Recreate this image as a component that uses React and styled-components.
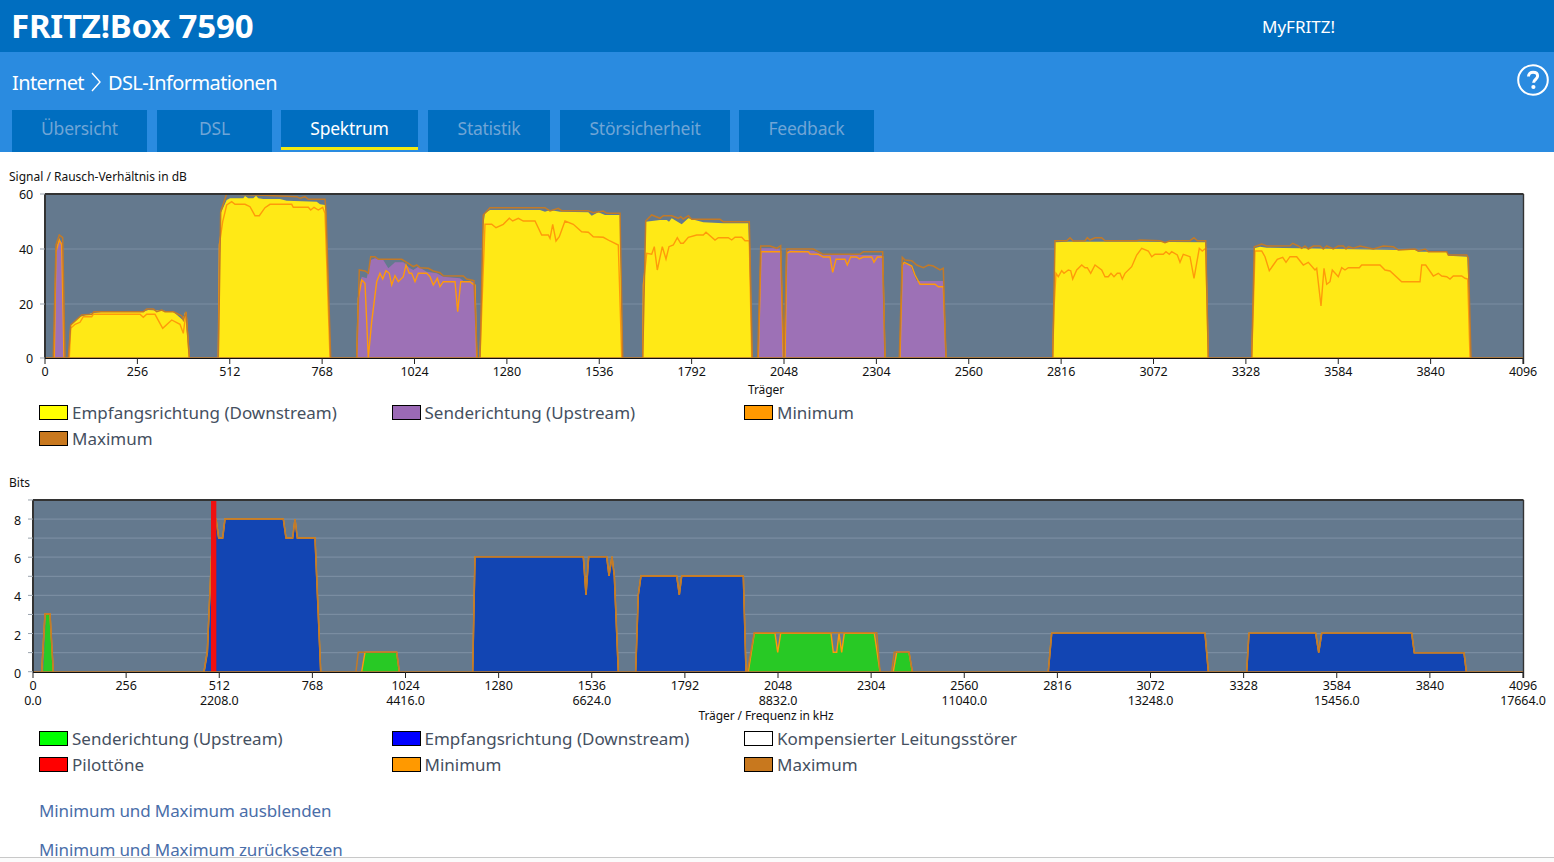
import React from "react";
import styled, { createGlobalStyle } from "styled-components";

const GlobalStyle = createGlobalStyle`
  html, body {
    margin: 0;
    padding: 0;
    height: 862px;
    overflow: hidden;
    background: #fff;
    font-family: "Noto Sans", "Open Sans", sans-serif;
  }
`;

// Punkte aus dem Screenshot: Ausschnitt-Koordinaten (3x) zurueck auf Seitenpixel
const z = (ox, oy, pts) => pts.map(([x, y]) => [ox + x / 3, oy + y / 3]);
const str = (pts) => pts.map(([x, y]) => `${x.toFixed(1)},${y.toFixed(1)}`).join(" ");

const A = (pts) => z(0, 165, pts);
const B = (pts) => z(470, 185, pts);
const C = (pts) => z(1040, 225, pts);
const YELLOW = "#FFE916";
const PURPLE = "#9D71B6";
const GREEN = "#28C925";
const BLUE = "#1245B3";

const snrBlocks = [
  {
    color: PURPLE,
    fill: A([[163, 578], [170, 245], [178, 225], [188, 235], [195, 578]]),
    max: A([[160, 578], [168, 240], [178, 210], [188, 218], [195, 578]]),
    min: A([[163, 578], [168, 260], [178, 225], [185, 240], [192, 578]]),
  },
  {
    color: YELLOW,
    fill: A([[205, 578], [212, 480], [240, 455], [275, 445], [310, 440], [430, 440], [445, 435], [490, 437], [520, 440], [548, 465], [555, 442], [568, 578]]),
    max: A([[205, 578], [212, 480], [245, 450], [275, 448], [282, 440], [430, 440], [440, 432], [460, 432], [470, 440], [485, 435], [495, 440], [520, 440], [545, 452], [550, 465], [558, 440], [568, 578]]),
    min: A([[208, 578], [212, 490], [225, 478], [240, 472], [250, 455], [275, 455], [280, 448], [420, 448], [430, 457], [440, 448], [465, 448], [488, 490], [515, 465], [540, 478], [550, 505], [558, 442], [568, 578]]),
  },
  {
    color: YELLOW,
    fill: A([[655, 578], [662, 145], [680, 105], [690, 100], [730, 100], [735, 93], [745, 100], [760, 100], [768, 92], [775, 100], [790, 102], [840, 102], [860, 107], [950, 110], [960, 118], [975, 120], [978, 140], [992, 578]]),
    max: A([[655, 578], [662, 140], [680, 87], [770, 90], [890, 95], [900, 100], [915, 95], [925, 103], [975, 103], [978, 140], [992, 578]]),
    min: A([[655, 578], [658, 240], [668, 170], [680, 120], [695, 110], [705, 118], [735, 118], [750, 125], [765, 152], [778, 152], [795, 128], [810, 118], [875, 118], [880, 127], [925, 127], [932, 135], [942, 127], [955, 135], [968, 127], [975, 145], [990, 578]]),
  },
  {
    color: PURPLE,
    fill: A([[1070, 578], [1078, 360], [1085, 335], [1100, 340], [1112, 285], [1125, 280], [1150, 285], [1165, 310], [1185, 292], [1210, 292], [1230, 310], [1240, 315], [1255, 305], [1280, 320], [1310, 325], [1330, 335], [1380, 340], [1390, 348], [1422, 350], [1432, 578]]),
    max: A([[1070, 578], [1078, 315], [1095, 318], [1105, 325], [1112, 275], [1125, 275], [1135, 283], [1205, 283], [1225, 295], [1240, 305], [1250, 300], [1260, 308], [1285, 310], [1300, 318], [1320, 323], [1330, 332], [1390, 333], [1400, 342], [1422, 347], [1432, 578]]),
    min: A([[1070, 578], [1075, 400], [1085, 345], [1095, 355], [1105, 578], [1115, 470], [1130, 350], [1140, 325], [1148, 342], [1158, 317], [1168, 325], [1175, 360], [1185, 332], [1195, 350], [1210, 335], [1218, 300], [1228, 325], [1235, 325], [1245, 350], [1255, 325], [1280, 325], [1290, 335], [1300, 360], [1312, 340], [1320, 365], [1330, 350], [1365, 350], [1373, 440], [1382, 350], [1410, 350], [1420, 358], [1425, 360], [1430, 578]]),
  },
  {
    color: YELLOW,
    fill: B([[30, 518], [40, 120], [45, 85], [60, 75], [210, 75], [225, 80], [240, 75], [270, 80], [355, 82], [365, 92], [385, 82], [405, 90], [450, 90], [458, 518]]),
    max: B([[30, 518], [40, 90], [60, 68], [225, 68], [240, 78], [265, 70], [275, 77], [355, 77], [370, 83], [400, 78], [410, 85], [450, 85], [458, 518]]),
    min: B([[30, 518], [38, 300], [45, 118], [65, 118], [78, 128], [100, 118], [118, 100], [128, 108], [145, 100], [160, 108], [195, 108], [215, 150], [235, 150], [240, 160], [248, 118], [258, 168], [268, 155], [285, 108], [310, 118], [335, 140], [355, 142], [370, 155], [400, 157], [420, 168], [445, 180], [455, 518]]),
  },
  {
    color: YELLOW,
    fill: B([[518, 518], [527, 110], [570, 105], [590, 105], [597, 110], [605, 100], [635, 118], [655, 100], [700, 112], [760, 115], [835, 115], [847, 518]]),
    max: B([[518, 518], [527, 108], [545, 90], [570, 100], [580, 92], [605, 92], [625, 100], [632, 95], [640, 102], [655, 92], [665, 103], [750, 103], [760, 110], [838, 110], [847, 518]]),
    min: B([[518, 518], [520, 300], [530, 205], [545, 208], [553, 185], [562, 255], [577, 185], [588, 222], [597, 185], [610, 180], [622, 158], [632, 175], [640, 175], [655, 157], [680, 150], [700, 150], [708, 142], [735, 165], [745, 158], [775, 158], [785, 165], [795, 157], [815, 157], [825, 167], [838, 167], [845, 518]]),
  },
  {
    color: PURPLE,
    fill: B([[863, 518], [872, 190], [920, 190], [932, 195], [942, 518]]),
    max: B([[863, 518], [872, 183], [900, 183], [920, 190], [932, 182], [942, 518]]),
    min: B([[865, 518], [873, 200], [932, 200], [940, 518]]),
  },
  {
    color: PURPLE,
    fill: B([[945, 518], [950, 200], [960, 195], [1030, 197], [1060, 210], [1235, 210], [1245, 518]]),
    max: B([[942, 518], [950, 192], [1030, 192], [1060, 208], [1170, 208], [1180, 200], [1238, 200], [1245, 518]]),
    min: B([[945, 518], [950, 205], [960, 200], [1015, 200], [1020, 207], [1045, 208], [1060, 216], [1080, 216], [1088, 262], [1098, 223], [1125, 223], [1132, 240], [1142, 216], [1160, 216], [1168, 222], [1180, 216], [1205, 216], [1212, 232], [1222, 216], [1238, 216], [1245, 518]]),
  },
  {
    color: PURPLE,
    fill: B([[1288, 518], [1297, 235], [1320, 240], [1340, 288], [1420, 288], [1428, 518]]),
    max: B([[1288, 518], [1297, 217], [1305, 225], [1325, 227], [1340, 240], [1360, 248], [1375, 240], [1390, 243], [1410, 255], [1420, 250], [1428, 518]]),
    min: B([[1290, 518], [1297, 240], [1303, 232], [1325, 243], [1335, 270], [1350, 298], [1395, 298], [1405, 305], [1420, 305], [1428, 518]]),
  },
  {
    color: YELLOW,
    fill: C([[38, 398], [45, 52], [85, 50], [190, 50], [290, 50], [497, 52], [505, 398]]),
    max: C([[38, 398], [45, 47], [80, 47], [90, 38], [100, 48], [135, 47], [142, 38], [150, 45], [165, 38], [185, 38], [195, 47], [290, 47], [300, 45], [360, 47], [375, 53], [390, 47], [450, 47], [462, 38], [472, 47], [497, 47], [505, 398]]),
    min: C([[38, 398], [42, 250], [48, 145], [55, 155], [65, 137], [72, 145], [85, 135], [92, 137], [98, 162], [110, 135], [125, 120], [135, 128], [142, 128], [152, 145], [165, 120], [185, 135], [195, 155], [205, 155], [213, 145], [222, 155], [232, 145], [240, 145], [247, 162], [255, 145], [275, 125], [290, 90], [305, 70], [325, 78], [335, 95], [345, 88], [370, 88], [378, 80], [388, 88], [395, 80], [412, 90], [420, 112], [430, 88], [450, 95], [462, 160], [478, 70], [487, 78], [497, 70], [505, 398]]),
  },
  {
    color: YELLOW,
    fill: C([[635, 398], [643, 70], [660, 65], [680, 68], [1060, 75], [1125, 75], [1135, 80], [1220, 80], [1225, 92], [1282, 95], [1293, 398]]),
    max: C([[635, 398], [643, 65], [665, 57], [680, 63], [750, 62], [758, 55], [775, 63], [785, 70], [795, 63], [805, 72], [820, 63], [840, 63], [850, 72], [860, 63], [880, 72], [895, 63], [910, 63], [918, 72], [925, 65], [940, 70], [960, 63], [1000, 72], [1030, 63], [1060, 65], [1075, 75], [1125, 72], [1135, 78], [1155, 72], [1165, 80], [1220, 80], [1225, 90], [1280, 90], [1285, 100], [1293, 398]]),
    min: C([[635, 398], [640, 250], [645, 78], [665, 78], [675, 95], [688, 137], [700, 120], [712, 103], [728, 97], [738, 112], [750, 95], [770, 95], [790, 120], [805, 112], [825, 135], [830, 130], [843, 243], [852, 130], [860, 178], [870, 170], [877, 135], [895, 155], [905, 128], [915, 135], [925, 128], [958, 128], [965, 120], [1020, 120], [1035, 135], [1050, 138], [1085, 170], [1140, 170], [1145, 120], [1157, 120], [1180, 153], [1195, 145], [1205, 153], [1220, 155], [1230, 162], [1240, 153], [1265, 153], [1275, 160], [1283, 162], [1290, 398]]),
  },
];

const D = (pts) => z(0, 475, pts);
const E = (pts) => z(460, 540, pts);
const F = (pts) => z(1030, 620, pts);

const bitBlocks = [
  { color: GREEN, fill: D([[130, 590], [138, 417], [150, 417], [160, 590]]), max: D([[125, 590], [135, 417], [150, 417], [160, 590]]) },
  { color: BLUE, fill: D([[615, 590], [625, 530], [632, 300], [640, 132], [648, 132], [656, 189], [668, 189], [675, 132], [850, 132], [858, 189], [878, 189], [885, 132], [892, 189], [945, 189], [962, 590]]), max: D([[612, 590], [622, 530], [632, 300], [640, 132], [648, 132], [656, 189], [668, 189], [675, 132], [850, 132], [858, 189], [878, 189], [885, 132], [892, 189], [945, 189], [962, 590]]) },
  { color: GREEN, fill: D([[1085, 590], [1095, 532], [1190, 532], [1198, 590]]), max: D([[1068, 590], [1075, 532], [1190, 532], [1198, 590]]), min: D([[1085, 590], [1095, 532], [1190, 532], [1198, 590]]) },
  { color: BLUE, fill: E([[38, 395], [45, 50], [370, 50], [378, 165], [386, 50], [440, 50], [447, 108], [456, 50], [463, 108], [475, 395]]), max: E([[38, 395], [45, 50], [370, 50], [378, 165], [386, 50], [440, 50], [447, 108], [456, 50], [463, 108], [475, 395]]) },
  { color: BLUE, fill: E([[527, 395], [535, 165], [543, 108], [650, 108], [658, 165], [665, 108], [850, 108], [858, 395]]), max: E([[527, 395], [535, 165], [543, 108], [650, 108], [658, 165], [665, 108], [850, 108], [858, 395]]) },
  { color: GREEN, fill: E([[865, 395], [883, 280], [945, 280], [953, 337], [962, 280], [1113, 280], [1120, 337], [1130, 337], [1137, 280], [1145, 337], [1153, 280], [1243, 280], [1260, 395]]), max: E([[862, 395], [883, 278], [1250, 278], [1260, 395]]), min: E([[865, 395], [883, 280], [945, 280], [953, 337], [962, 280], [1113, 280], [1120, 337], [1130, 337], [1137, 280], [1145, 337], [1153, 280], [1243, 280], [1252, 340], [1260, 395]]) },
  { color: GREEN, fill: E([[1300, 395], [1310, 337], [1347, 337], [1357, 395]]), max: E([[1295, 395], [1303, 337], [1347, 337], [1357, 395]]), min: E([[1300, 395], [1310, 337], [1347, 337], [1357, 395]]) },
  { color: BLUE, fill: F([[55, 155], [65, 40], [525, 40], [535, 155]]), max: F([[55, 155], [65, 40], [525, 40], [535, 155]]) },
  { color: BLUE, fill: F([[650, 155], [657, 40], [857, 40], [866, 98], [875, 40], [1145, 40], [1153, 98], [1302, 98], [1309, 155]]), max: F([[650, 155], [657, 40], [857, 40], [866, 98], [875, 40], [1145, 40], [1153, 98], [1302, 98], [1309, 155]]) },
];

const carriers = Array.from({ length: 17 }, (_, i) => i * 256);

const Page = styled.div`
  width: 1554px;
  height: 862px;
  overflow: hidden;
  position: relative;
`;

const TopBar = styled.header`
  height: 52px;
  background: #006ec0;
  display: flex;
  align-items: center;
  color: #fff;
`;

const Brand = styled.div`
  width: 1262px;
  padding-left: 11px;
  box-sizing: border-box;
  font-size: 33px;
  font-weight: 700;
  letter-spacing: -0.2px;
  line-height: 52px;
`;

const MyFritz = styled.div`
  font-size: 17px;
`;

const SubBar = styled.div`
  height: 100px;
  background: #2a8be0;
  display: flex;
  flex-direction: column;
  position: relative;
`;

const Crumbs = styled.div`
  height: 58px;
  box-sizing: border-box;
  padding: 2px 0 0 12px;
  display: flex;
  align-items: center;
  gap: 7px;
  color: #fff;
  font-size: 20px;
  letter-spacing: -0.6px;
`;

const HelpButton = styled.div`
  position: absolute;
  top: 12px;
  right: 5px;
  width: 32px;
  height: 32px;
`;

const Tabs = styled.nav`
  display: flex;
  padding-left: 12px;
  height: 42px;
`;

const Tab = styled.div`
  width: ${(p) => p.$w}px;
  margin-right: ${(p) => p.$gap}px;
  box-sizing: border-box;
  background: #006ec0;
  color: ${(p) => (p.$active ? "#fff" : "#6fa5d6")};
  font-size: 17.5px;
  letter-spacing: -0.25px;
  text-align: center;
  line-height: 37px;
  height: ${(p) => (p.$active ? "40px" : "42px")};
  border-bottom: ${(p) => (p.$active ? "3px solid #f2ea12" : "none")};
`;

const ChartTitle = styled.div`
  margin: ${(p) => p.$top}px 0 ${(p) => p.$bottom}px 9px;
  font-size: 12px;
  line-height: 16px;
  color: #111;
`;

const ChartSvg = styled.svg`
  display: block;
  text {
    font-family: "Noto Sans", sans-serif;
    font-size: 12.5px;
    letter-spacing: -0.1px;
    fill: #111;
  }
`;

const AxisName = styled.text`
  && {
    font-size: 12px;
  }
`;

const MaxLine = styled.polyline`
  fill: none;
  stroke: #c27a28;
  stroke-width: 1.5;
`;

const MinLine = styled.polyline`
  fill: none;
  stroke: #ff9a0a;
  stroke-width: 1.4;
`;

const Legend = styled.div`
  display: grid;
  grid-template-columns: repeat(3, 352.5px);
  grid-auto-rows: 26px;
  padding-left: 39px;
`;

const LegendItem = styled.div`
  display: flex;
  align-items: center;
  gap: 4px;
  font-size: 17px;
  line-height: 24px;
  color: #45505f;
`;

const Swatch = styled.span`
  width: 29px;
  height: 15px;
  box-sizing: border-box;
  border: 1px solid #000;
  background: ${(p) => p.$color};
  margin-top: -1px;
`;

const LinkRow = styled.a`
  display: block;
  margin: ${(p) => p.$top}px 0 0 39px;
  font-size: 17px;
  letter-spacing: -0.12px;
  line-height: 26px;
  color: #4a6ea9;
`;

const FootBar = styled.div`
  position: absolute;
  left: 0;
  right: 0;
  bottom: 0;
  height: 4px;
  background: #fbfbfb;
  border-top: 1px solid #c8c8c8;
`;

function Plot({ left, top, bottom, gridYs, blocks }) {
  return (
    <>
      <rect x={left} y={top} width={1523 - left} height={bottom - top} fill="#64798e" />
      {gridYs.map((y) => (
        <line key={y} x1={left} x2={1523} y1={y} y2={y} stroke="#7a8da1" strokeWidth="1.2" />
      ))}
      {blocks.map((b, i) => (
        <polygon key={i} points={str(b.fill)} fill={b.color} />
      ))}
    </>
  );
}

function Frame({ left, top, bottom }) {
  return (
    <>
      <line x1={left} x2={1523} y1={bottom} y2={bottom} stroke="#c27a28" strokeWidth="1.4" />
      <line x1={left} x2={1523} y1={bottom + 0.5} y2={bottom + 0.5} stroke="#111" strokeWidth="1" />
      <line x1={left} x2={1523.5} y1={top} y2={top} stroke="#333" strokeWidth="2" />
      <line x1={left} x2={left} y1={top} y2={bottom} stroke="#333" strokeWidth="2" />
      <line x1={1523.5} x2={1523.5} y1={top} y2={bottom + 6} stroke="#333" strokeWidth="1.4" />
    </>
  );
}

function SnrChart() {
  const xOf = (c) => 45 + (c / 4096) * 1478;
  return (
    <ChartSvg width="1554" height="214" viewBox="0 186 1554 214">
      <Plot left={45} top={194} bottom={358} gridYs={[249, 304]} blocks={snrBlocks} />
      {snrBlocks.map((b, i) => (
        <React.Fragment key={i}>
          <MinLine points={str(b.min)} />
          <MaxLine points={str(b.max)} />
        </React.Fragment>
      ))}
      <Frame left={45} top={194} bottom={358} />
      {[[60, 194], [40, 249], [20, 304], [0, 358]].map(([v, y]) => (
        <React.Fragment key={v}>
          <line x1={40} x2={45} y1={y} y2={y} stroke="#9aa3ad" />
          <text x={33} y={y + 4.5} textAnchor="end">{v}</text>
        </React.Fragment>
      ))}
      {carriers.map((c) => (
        <React.Fragment key={c}>
          <line x1={xOf(c)} x2={xOf(c)} y1={358} y2={364} stroke="#222" />
          <text x={xOf(c)} y={376} textAnchor="middle">{c}</text>
        </React.Fragment>
      ))}
      <AxisName x={766} y={394} textAnchor="middle">Träger</AxisName>
    </ChartSvg>
  );
}

function BitsChart() {
  const xOf = (c) => 33 + (c / 4096) * 1490;
  const yOf = (b) => 671.7 - b * 19.08;
  return (
    <ChartSvg width="1554" height="236" viewBox="0 490 1554 236">
      <Plot left={33} top={500} bottom={672} gridYs={[1, 2, 3, 4, 5, 6, 7, 8].map(yOf)} blocks={bitBlocks} />
      {bitBlocks.map((b, i) => (
        <React.Fragment key={i}>
          <MinLine points={str(b.min || b.max)} />
          <MaxLine points={str(b.max)} />
        </React.Fragment>
      ))}
      <rect x={211} y={500} width={5.3} height={172} fill="#f01010" />
      <Frame left={33} top={500} bottom={672} />
      {[0, 1, 2, 3, 4, 5, 6, 7, 8, 9].map((b) => (
        <line key={b} x1={28} x2={33} y1={yOf(b)} y2={yOf(b)} stroke="#9aa3ad" />
      ))}
      {[0, 2, 4, 6, 8].map((b) => (
        <text key={b} x={21} y={yOf(b) + 6} textAnchor="end">{b}</text>
      ))}
      {carriers.map((c) => (
        <React.Fragment key={c}>
          <line x1={xOf(c)} x2={xOf(c)} y1={672} y2={678} stroke="#222" />
          <text x={xOf(c)} y={690} textAnchor="middle">{c}</text>
          {c % 512 === 0 && (
            <text x={xOf(c)} y={705} textAnchor="middle">{((c / 512) * 2208).toFixed(1)}</text>
          )}
        </React.Fragment>
      ))}
      <AxisName x={766} y={720} textAnchor="middle">Träger / Frequenz in kHz</AxisName>
    </ChartSvg>
  );
}

const tabs = [
  ["Übersicht", 135, 10],
  ["DSL", 115, 9],
  ["Spektrum", 137, 10],
  ["Statistik", 122, 10],
  ["Störsicherheit", 170, 9],
  ["Feedback", 135, 0],
];

const App = () => (
  <Page>
    <GlobalStyle />
    <TopBar>
      <Brand>FRITZ!Box 7590</Brand>
      <MyFritz>MyFRITZ!</MyFritz>
    </TopBar>
    <SubBar>
      <Crumbs>
        Internet
        <svg width="10" height="20" viewBox="0 0 10 20">
          <path d="M1 1l8 9-8 9" fill="none" stroke="#fff" strokeWidth="1.4" />
        </svg>
        DSL-Informationen
      </Crumbs>
      <HelpButton>
        <svg width="32" height="32" viewBox="0 0 32 32">
          <circle cx="16" cy="16" r="14.8" fill="none" stroke="#fff" strokeWidth="2" />
          <path d="M11.5 12.5c0-2.8 2-4.3 4.6-4.3 2.7 0 4.5 1.5 4.5 3.9 0 3.3-4 3.5-4 6.6" fill="none" stroke="#fff" strokeWidth="3" />
          <circle cx="16.4" cy="23" r="2.1" fill="#fff" />
        </svg>
      </HelpButton>
      <Tabs>
        {tabs.map(([label, w, gap]) => (
          <Tab key={label} $w={w} $gap={gap} $active={label === "Spektrum"}>{label}</Tab>
        ))}
      </Tabs>
    </SubBar>
    <ChartTitle $top={17} $bottom={1}>Signal / Rausch-Verhältnis in dB</ChartTitle>
    <SnrChart />
    <Legend>
      <LegendItem><Swatch $color="#ffff00" />Empfangsrichtung (Downstream)</LegendItem>
      <LegendItem><Swatch $color="#9b69b5" />Senderichtung (Upstream)</LegendItem>
      <LegendItem><Swatch $color="#ff9900" />Minimum</LegendItem>
      <LegendItem><Swatch $color="#c8781e" />Maximum</LegendItem>
    </Legend>
    <ChartTitle $top={23} $bottom={-1}>Bits</ChartTitle>
    <BitsChart />
    <Legend>
      <LegendItem><Swatch $color="#00ff00" />Senderichtung (Upstream)</LegendItem>
      <LegendItem><Swatch $color="#0000ff" />Empfangsrichtung (Downstream)</LegendItem>
      <LegendItem><Swatch $color="#ffffff" />Kompensierter Leitungsstörer</LegendItem>
      <LegendItem><Swatch $color="#ff0000" />Pilottöne</LegendItem>
      <LegendItem><Swatch $color="#ff9900" />Minimum</LegendItem>
      <LegendItem><Swatch $color="#c8781e" />Maximum</LegendItem>
    </Legend>
    <LinkRow $top={20}>Minimum und Maximum ausblenden</LinkRow>
    <LinkRow $top={13}>Minimum und Maximum zurücksetzen</LinkRow>
    <FootBar />
  </Page>
);

export default App;
